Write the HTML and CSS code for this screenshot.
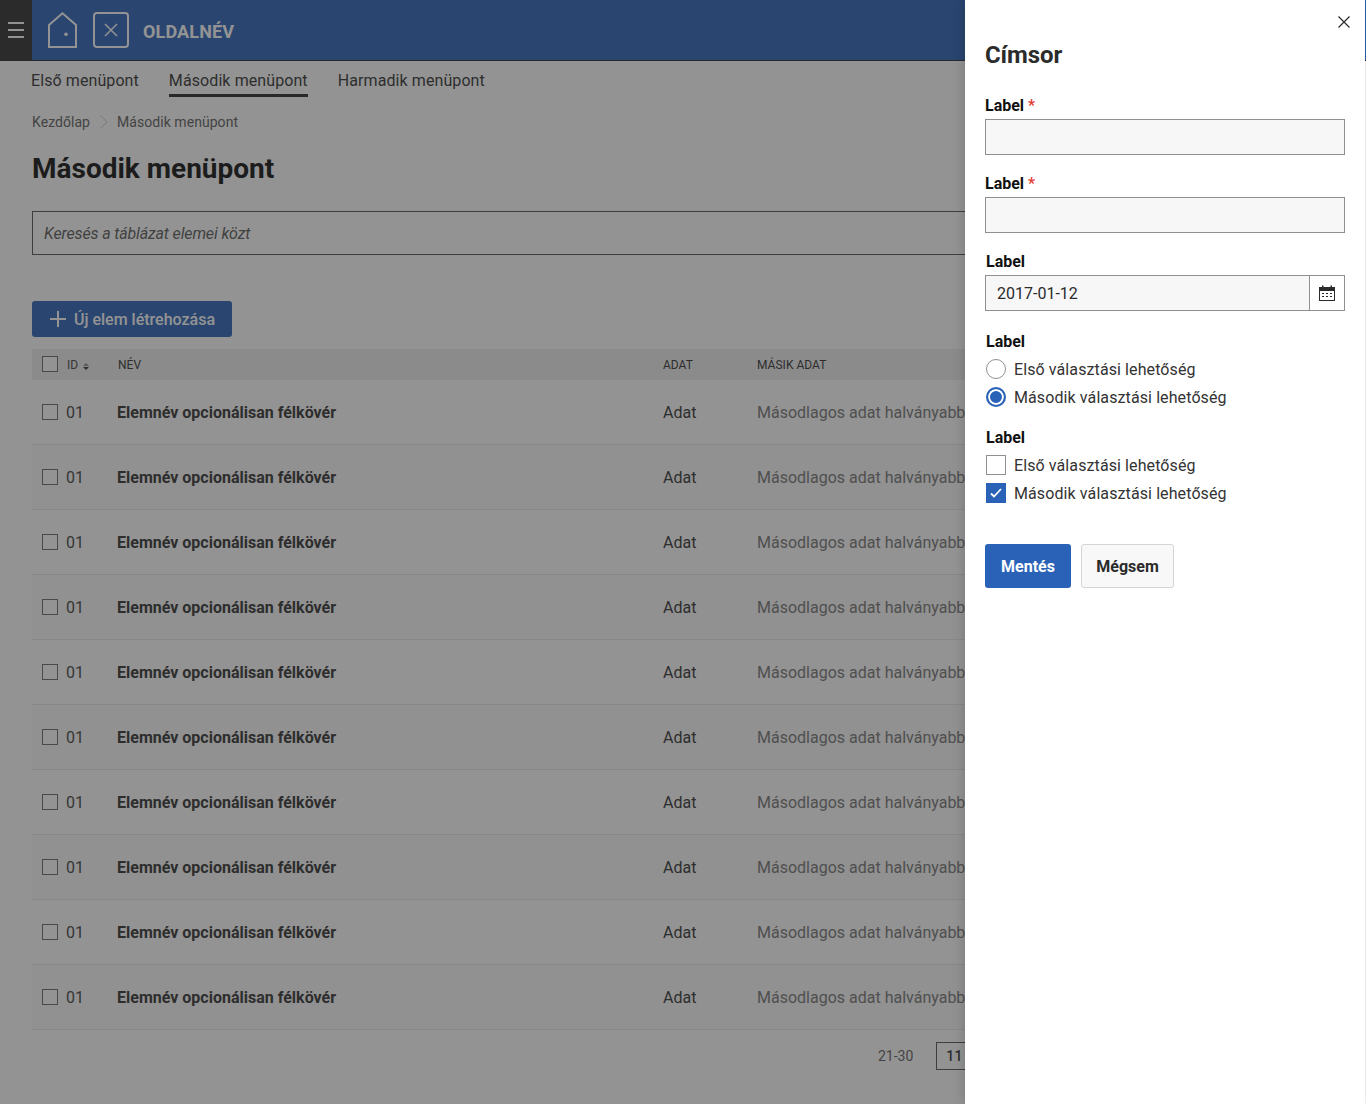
FILE: index.html
```html
<!DOCTYPE html>
<html lang="hu">
<head>
<meta charset="utf-8">
<title>Második menüpont</title>
<link rel="stylesheet" href="styles.css">
</head>
<body>
<div class="page">
  <header class="topbar">
    <button class="burger" aria-label="Menü"><span></span><span></span><span></span></button>
    <svg class="home" width="29" height="36" viewBox="0 0 29 36" fill="none" stroke="currentColor" stroke-width="2"><path d="M1 13 14.500 1.300 28 13V35H1z"/><circle cx="18" cy="22.300" r="1.800" fill="currentColor" stroke="none"/></svg>
    <div class="logo-box"><svg width="14" height="14" viewBox="0 0 14 14" fill="none" stroke="currentColor" stroke-width="1.500"><path d="M1 1l12 12M13 1L1 13"/></svg></div>
    <div class="site-name">OLDALNÉV</div>
  </header>
  <nav class="tabs">
    <a>Első menüpont</a>
    <a class="active">Második menüpont</a>
    <a>Harmadik menüpont</a>
  </nav>
  <main class="content">
    <div class="crumbs">
      <span>Kezdőlap</span>
      <svg width="10" height="16" viewBox="0 0 10 16" fill="none" stroke="#cfcfcf" stroke-width="1"><path d="M1.500 1.500 8 8l-6.500 6.500"/></svg>
      <span>Második menüpont</span>
    </div>
    <h1>Második menüpont</h1>
    <div class="search">Keresés a táblázat elemei közt</div>
    <button class="new-btn">
      <svg width="18" height="18" viewBox="0 0 18 18" stroke="currentColor" stroke-width="2"><path d="M9 1v16M1 9h16"/></svg>
      Új elem létrehozása
    </button>
    <div class="table">
      <div class="row head">
        <span class="box"></span>
        <span class="c-id">ID <svg class="sort" width="6" height="7" viewBox="0 0 6 7"><path fill="#8a8a8a" d="M0 3 3 0l3 3z"/><path fill="#333" d="M0 4h6L3 7z"/></svg></span>
        <span class="c-name">NÉV</span>
        <span class="c-data">ADAT</span>
        <span class="c-other">MÁSIK ADAT</span>
      </div>
      <div class="row"><span class="box"></span><span class="c-id">01</span><span class="c-name">Elemnév opcionálisan félkövér</span><span class="c-data">Adat</span><span class="c-other">Másodlagos adat halványabban</span></div>
      <div class="row"><span class="box"></span><span class="c-id">01</span><span class="c-name">Elemnév opcionálisan félkövér</span><span class="c-data">Adat</span><span class="c-other">Másodlagos adat halványabban</span></div>
      <div class="row"><span class="box"></span><span class="c-id">01</span><span class="c-name">Elemnév opcionálisan félkövér</span><span class="c-data">Adat</span><span class="c-other">Másodlagos adat halványabban</span></div>
      <div class="row"><span class="box"></span><span class="c-id">01</span><span class="c-name">Elemnév opcionálisan félkövér</span><span class="c-data">Adat</span><span class="c-other">Másodlagos adat halványabban</span></div>
      <div class="row"><span class="box"></span><span class="c-id">01</span><span class="c-name">Elemnév opcionálisan félkövér</span><span class="c-data">Adat</span><span class="c-other">Másodlagos adat halványabban</span></div>
      <div class="row"><span class="box"></span><span class="c-id">01</span><span class="c-name">Elemnév opcionálisan félkövér</span><span class="c-data">Adat</span><span class="c-other">Másodlagos adat halványabban</span></div>
      <div class="row"><span class="box"></span><span class="c-id">01</span><span class="c-name">Elemnév opcionálisan félkövér</span><span class="c-data">Adat</span><span class="c-other">Másodlagos adat halványabban</span></div>
      <div class="row"><span class="box"></span><span class="c-id">01</span><span class="c-name">Elemnév opcionálisan félkövér</span><span class="c-data">Adat</span><span class="c-other">Másodlagos adat halványabban</span></div>
      <div class="row"><span class="box"></span><span class="c-id">01</span><span class="c-name">Elemnév opcionálisan félkövér</span><span class="c-data">Adat</span><span class="c-other">Másodlagos adat halványabban</span></div>
      <div class="row"><span class="box"></span><span class="c-id">01</span><span class="c-name">Elemnév opcionálisan félkövér</span><span class="c-data">Adat</span><span class="c-other">Másodlagos adat halványabban</span></div>
    </div>
    <div class="pager"><span class="range">21-30</span><span class="page-num">11</span></div>
  </main>
</div>
<div class="overlay"></div>
<aside class="drawer">
  <button class="close" aria-label="Bezárás"><svg width="12" height="12" viewBox="0 0 12 12" fill="none" stroke="#2b2b2b" stroke-width="1.200"><path d="M.5.500l11 11M11.500.500l-11 11"/></svg></button>
  <h2>Címsor</h2>
  <div class="field">
    <label>Label <i>*</i></label>
    <div class="input"></div>
  </div>
  <div class="field">
    <label>Label <i>*</i></label>
    <div class="input"></div>
  </div>
  <div class="field shifted">
    <label>Label</label>
    <div class="input date">
      <span class="value">2017-01-12</span>
      <span class="cal"><svg width="16" height="16" viewBox="0 0 16 16"><path fill="#2b2b2b" d="M0 2h3V.500h1.500V2h7V.500H13V2h3v14H0zM1 6v9h14V6z"/><path fill="#2b2b2b" d="M3 8h2v1H3zM7 8h2v1H7zM11 8h2v1h-2zM3 11h2v1H3zM7 11h2v1H7zM11 11h2v1h-2z"/></svg></span>
    </div>
  </div>
  <div class="group">
    <label>Label</label>
    <div class="opt"><span class="radio"></span>Első választási lehetőség</div>
    <div class="opt"><span class="radio on"></span>Második választási lehetőség</div>
  </div>
  <div class="group">
    <label>Label</label>
    <div class="opt"><span class="check"></span>Első választási lehetőség</div>
    <div class="opt"><span class="check on"><svg width="14" height="12" viewBox="0 0 14 12" fill="none" stroke="#fff" stroke-width="1.800"><path d="M2 6.500 5 9.500l7-7.500"/></svg></span>Második választási lehetőség</div>
  </div>
  <div class="actions">
    <button class="save">Mentés</button>
    <button class="cancel">Mégsem</button>
  </div>
</aside>
</body>
</html>
```
FILE: styles.css
```css
* { box-sizing: border-box; }
html, body { margin: 0; height: 1104px; overflow: hidden; }
body { font-family: Roboto, "Liberation Sans", sans-serif; color: #2b2b2b; background: #fff; position: relative; }
button { font-family: inherit; }
.page { width: 1366px; }
.topbar { height: 61px; background: #2a62b8; border-bottom: 1px solid #2b2b2b; display: flex; align-items: center; color: #fff; }
.burger { width: 32px; height: 60px; background: #2e2e2e; border: 0; padding: 0; display: flex; flex-direction: column; justify-content: center; align-items: center; gap: 5px; }
.burger span { display: block; width: 16px; height: 2px; background: #fff; }
.home { margin-left: 16px; }
.logo-box { width: 36px; height: 36px; border: 2px solid #fff; border-radius: 4px; margin-left: 16px; display: flex; align-items: center; justify-content: center; }
.site-name { margin-left: 14px; padding-top: 2px; font-size: 18px; font-weight: 700; letter-spacing: .15px; }
.tabs { display: flex; gap: 30px; padding-left: 31px; height: 36px; font-size: 16px; letter-spacing: .09px; }
.tabs a { height: 36px; line-height: 40px; border-bottom: 3px solid transparent; color: #333; }
.tabs a.active { border-bottom-color: #2b2b2b; }
.content { padding: 0 0 0 32px; }
.crumbs { display: flex; align-items: center; gap: 5px; height: 20px; margin-top: 15px; font-size: 14px; letter-spacing: .05px; color: #5e5e5e; }
.crumbs svg { margin: 0 3px 0 4px; }
h1 { margin: 19px 0 0; font-size: 28px; line-height: 36px; font-weight: 700; color: #111; }
.search { margin-top: 24px; width: 1300px; height: 44px; border: 1px solid #555; background: #fff; font-size: 16px; font-style: italic; letter-spacing: -.14px; line-height: 44px; padding-left: 11px; color: #5a5a5a; }
.new-btn { margin-top: 46px; width: 200px; height: 36px; border: 0; border-radius: 3px; background: #2a62b8; color: #fff; font-size: 16px; font-weight: 500; display: flex; align-items: center; gap: 7px; padding: 0 0 0 17px; }
.table { margin-top: 12px; width: 1302px; }
.row { height: 65px; border-bottom: 1px solid #e8e8e8; display: flex; align-items: center; font-size: 16px; white-space: nowrap; }
.row:nth-child(odd) { background: #fafafa; }
.row.head { height: 31px; background: #eee; border-bottom: 0; font-size: 12px; color: #333; }
.box { width: 16px; height: 16px; border: 1px solid #6b6b6b; background: #fff; margin-left: 10px; flex: none; }
.head .box { margin-bottom: 1px; }
.c-id { width: 51px; margin-left: 8px; flex: none; color: #444; }
.head .c-id { margin-left: 9px; width: 51px; }
.sort { margin-left: 2px; vertical-align: -1px; }
.c-name { width: 546px; flex: none; font-weight: 700; color: #333; }
.head .c-name { font-weight: 400; width: 545px; }
.c-data { width: 94px; flex: none; color: #333; }
.c-other { color: #777; }
.head .c-other { color: #333; letter-spacing: .02px; }
.pager { display: flex; align-items: center; margin: 12px 0 0 846px; font-size: 14px; color: #5e5e5e; }
.page-num { margin-left: 23px; width: 40px; height: 28px; border: 1px solid #555; line-height: 26px; padding-left: 9px; letter-spacing: .3px; font-weight: 500; color: #333; }
.overlay { position: absolute; left: 0; top: 0; width: 1365px; height: 1104px; background: rgba(40, 40, 40, .5); }
.drawer { position: absolute; left: 965px; top: 0; width: 400px; height: 1104px; background: #fff; padding: 0 20px; box-shadow: 0 0 12px rgba(0, 0, 0, .2); }
.close { position: absolute; top: 16px; right: 15px; width: 12px; height: 12px; padding: 0; border: 0; background: none; display: block; line-height: 0; }
h2 { margin: 0; padding-top: 41px; font-size: 24px; line-height: 28px; font-weight: 700; letter-spacing: -.1px; color: #2b2b2b; }
label { display: block; padding-top: 1px; font-size: 16px; line-height: 20px; font-weight: 700; color: #111; }
label i { color: #e53a2f; font-style: normal; font-weight: 500; }
.field { margin-top: 26px; }
.field + .field { margin-top: 18px; }
.field.shifted label { padding-left: 1px; }
.input { height: 36px; margin-top: 3px; background: #f7f7f8; border: 1px solid #8f8f8f; }
.date { display: flex; align-items: stretch; }
.value { flex: 1; padding-left: 11px; line-height: 36px; font-size: 16px; }
.cal { width: 35px; background: #fff; border-left: 1px solid #8f8f8f; display: flex; align-items: center; justify-content: center; }
.group { margin-top: 20px; padding-left: 1px; }
.group + .group { margin-top: 16px; }
.group label { margin-bottom: 3px; }
.opt { display: flex; align-items: center; gap: 8px; height: 28px; font-size: 16px; color: #333; letter-spacing: .1px; }
.radio { width: 20px; height: 20px; border-radius: 50%; border: 1px solid #8f8f8f; background: #fff; flex: none; }
.radio.on { border: 2px solid #2a62b8; box-shadow: inset 0 0 0 2px #fff; background: #2a62b8; }
.check { width: 20px; height: 20px; border: 1px solid #8f8f8f; background: #fff; flex: none; display: flex; align-items: center; justify-content: center; }
.check.on { background: #2a62b8; border-color: #2a62b8; }
.actions { display: flex; gap: 10px; margin-top: 37px; }
.actions button { height: 44px; font-size: 16px; font-weight: 700; border-radius: 3px; padding: 0; }
.save { width: 86px; background: #2a62b8; border: 0; color: #fff; }
.cancel { width: 93px; background: #f8f8f8; border: 1px solid #d5d5d5; color: #2b2b2b; }
```
